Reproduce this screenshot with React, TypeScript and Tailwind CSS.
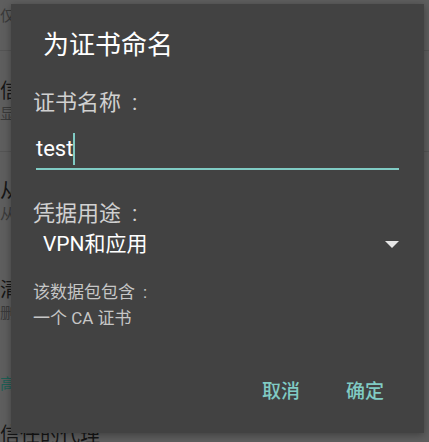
import * as React from "react"

const font = { fontFamily: 'Roboto, "Noto Sans CJK SC", sans-serif' }

function SettingRow({ title, summary, className }: { title: string; summary: string; className?: string }) {
  return (
    <div className={`flex flex-col justify-center ${className ?? ""}`}>
      <div className="text-[20px] leading-[26px] text-[#161616] whitespace-nowrap">{title}</div>
      <div className="text-[15px] leading-[20px] text-[#3a3a3a] whitespace-nowrap">{summary}</div>
    </div>
  )
}

// full-width colon, drawn centred like the device font does
function Colon({ gap }: { gap: string }) {
  return <span className={gap}>:</span>
}

export default function App() {
  return (
    <div className="relative w-[429px] h-[442px] overflow-hidden bg-[#5e5e5e]" style={font}>
      {/* settings list behind the dialog */}
      <div className="flex flex-col">
        <div className="h-[50px] pt-[6px] text-[15px] leading-[20px] text-[#3a3a3a] whitespace-nowrap">仅限软件</div>
        <div className="h-px bg-[#545454]" />
        <SettingRow className="h-[100px]" title="信任的凭据" summary="显示信任的 CA 证书" />
        <div className="h-px bg-[#545454]" />
        <SettingRow className="h-[98px]" title="从存储设备安装" summary="从存储设备安装证书" />
        <SettingRow className="h-[100px]" title="清除凭据" summary="删除所有证书" />
        <div className="pt-[23px] text-[15px] leading-[22px] text-[#1d5e54] whitespace-nowrap">高级</div>
        <div className="mt-[26px] text-[20px] leading-[28px] text-[#161616] whitespace-nowrap">信任的代理</div>
      </div>

      {/* dialog */}
      <div className="absolute left-[11px] top-[4px] w-[413px] h-[429px] bg-[#424242] flex flex-col shadow-[0_2px_8px_rgba(0,0,0,0.35)]">
        <div className="pl-[32px] pt-[25px] text-[26px] leading-[32px] text-white">为证书命名</div>

        <div className="px-[22px] flex flex-col">
          <div className="mt-[28px] text-[22px] leading-[28px] text-[#d0d0d0] whitespace-nowrap">
            证书名称<Colon gap="pl-[11px]" />
          </div>

          <div className="mx-[3px] mt-[16px] flex flex-col">
            <div className="flex items-center h-[32px]">
              <span className="text-[22px] leading-[32px] text-white">test</span>
              <span className="w-[2px] h-[32px] bg-[#80cbc4]" />
            </div>
            <div className="mt-[3px] h-[2px] bg-[#80cbc4]" />
          </div>

          <div className="mt-[30px] text-[22px] leading-[28px] text-[#d0d0d0] whitespace-nowrap">
            凭据用途<Colon gap="pl-[11px]" />
          </div>

          <div className="mt-[2px] flex items-center justify-between h-[28px]">
            <span className="pl-[10px] text-[21px] leading-[28px] text-white">VPN和应用</span>
            <svg className="mr-[3px]" width="14" height="7" viewBox="0 0 14 7">
              <path d="M0 0 L14 0 L7 7 Z" fill="#e6e6e6" />
            </svg>
          </div>

          <div className="mt-[21px] text-[17px] leading-[26px] text-[#c6c6c6] whitespace-nowrap">
            该数据包包含<Colon gap="pl-[8px]" />
          </div>
          <div className="text-[17px] leading-[26px] text-[#c6c6c6] whitespace-nowrap">一个 CA 证书</div>
        </div>

        <div className="mt-auto pb-[23px] pr-[32px] flex justify-end gap-[30px]">
          <button className="h-[36px] px-[8px] text-[19px] font-medium text-[#80cbc4]">取消</button>
          <button className="h-[36px] px-[8px] text-[19px] font-medium text-[#80cbc4]">确定</button>
        </div>
      </div>
    </div>
  )
}
